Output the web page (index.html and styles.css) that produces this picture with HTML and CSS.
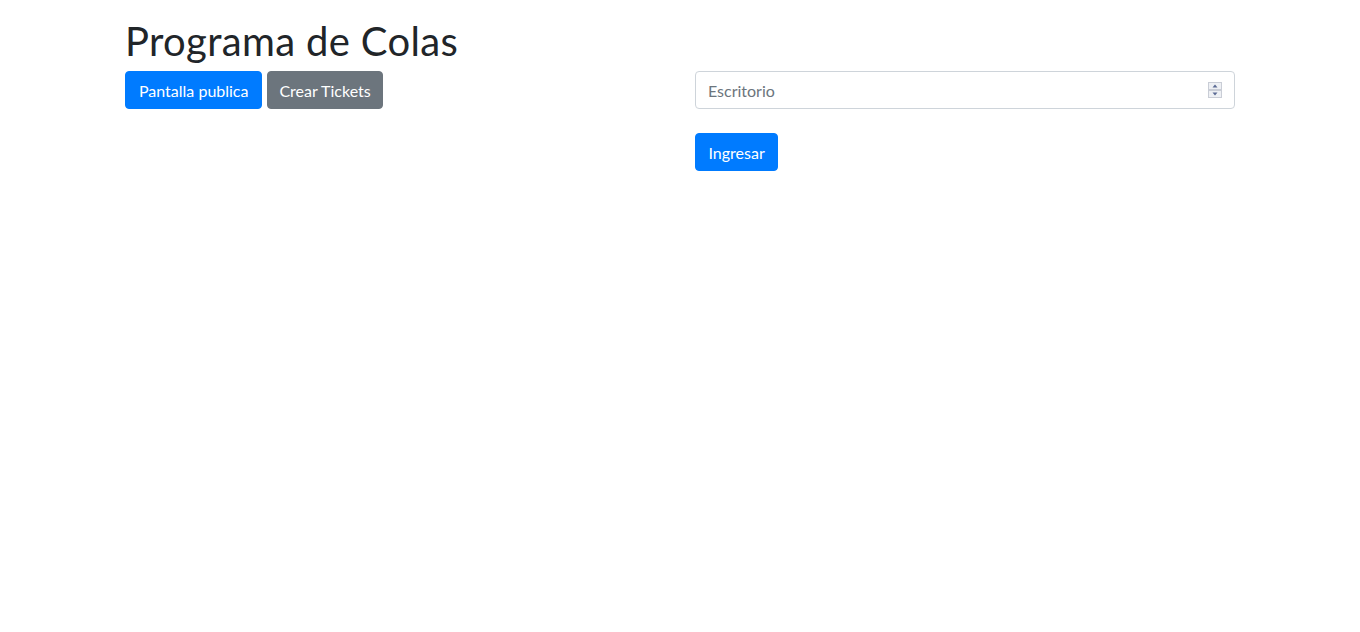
FILE: index.html
```html
<!DOCTYPE html>
<html lang="es">
<head>
<meta charset="utf-8">
<title>Programa de Colas</title>
<link rel="stylesheet" href="styles.css">
</head>
<body>
<div class="container">
  <h1 class="title">Programa de Colas</h1>
  <div class="row">
    <div class="col">
      <div class="btns">
        <button class="btn btn-primary btn-wide">Pantalla publica</button>
        <button class="btn btn-secondary btn-narrow">Crear Tickets</button>
      </div>
    </div>
    <div class="col">
      <form class="form">
        <div class="input-wrap">
          <input class="form-control" type="text" placeholder="Escritorio">
          <span class="spinner" aria-hidden="true">
            <svg width="14" height="16" viewBox="0 0 14 16">
              <rect x="0.5" y="0.5" width="13" height="7" fill="#eef0f4" stroke="#c9cdd6"/>
              <rect x="0.5" y="8.5" width="13" height="7" fill="#eef0f4" stroke="#c9cdd6"/>
              <path d="M4.5 5.5 L7 2.5 L9.5 5.5 Z" fill="#5b6a94"/>
              <path d="M4.5 10.5 L7 13.5 L9.5 10.5 Z" fill="#5b6a94"/>
            </svg>
          </span>
        </div>
        <button class="btn btn-primary submit" type="button">Ingresar</button>
      </form>
    </div>
  </div>
</div>
</body>
</html>
```
FILE: styles.css
```css
* { box-sizing: border-box; }
body {
  margin: 0;
  font-family: "Segoe UI", "Lato", "Noto Sans", sans-serif;
  font-size: 16px;
  line-height: 1.5;
  color: #212529;
  background: #fff;
}
.container {
  width: 1140px;
  margin: 0 auto;
  padding: 17px 15px 0;
}
.title {
  margin: 0 0 6px;
  font-size: 40px;
  font-weight: 400;
  line-height: 1.2;
  letter-spacing: 0.35px;
}
.row {
  display: flex;
  margin: 0 -15px;
}
.col {
  flex: 0 0 50%;
  padding: 0 15px;
}
.btns {
  display: flex;
  gap: 5px;
}
.btn {
  display: inline-block;
  font-family: inherit;
  font-size: 16px;
  line-height: 24px;
  padding: 7px 12px 5px;
  border: 1px solid transparent;
  border-radius: 4px;
  color: #fff;
  cursor: pointer;
}
.btn-wide { padding-left: 13px; padding-right: 13px; }
.btn-narrow { padding-left: 11px; padding-right: 11px; }
.btn-primary { background: #007bff; border-color: #007bff; }
.btn-secondary { background: #6c757d; border-color: #6c757d; }
.input-wrap {
  position: relative;
  margin-bottom: 24px;
}
.form-control {
  display: block;
  width: 100%;
  height: 38px;
  padding: 6px 12px;
  font-family: inherit;
  font-size: 16px;
  line-height: 24px;
  color: #495057;
  border: 1px solid #ced4da;
  border-radius: 4px;
  background: #fff;
}
.form-control::placeholder { color: #6c757d; }
.spinner {
  position: absolute;
  right: 13px;
  top: 11px;
  display: block;
  width: 14px;
  height: 16px;
}
.spinner svg { display: block; }
.submit { display: block; padding-left: 12.5px; padding-right: 12.5px; }
```
